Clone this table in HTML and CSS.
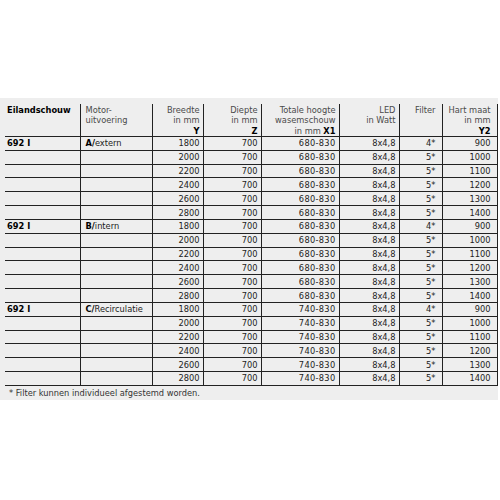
FILE: index.html
```html
<!DOCTYPE html>
<html>
<head>
<meta name="viewport" content="width=device-width, initial-scale=1">
<link rel="stylesheet" href="styles.css">
</head>
<body>

<div class="sheet">
    <table class="specs">
        <colgroup>
            <col class="c-name">
            <col class="c-motor">
            <col class="c-y">
            <col class="c-z">
            <col class="c-x1">
            <col class="c-led">
            <col class="c-filter">
            <col class="c-y2">
        </colgroup>
        <thead>
            <tr>
                <th class="name"><b>Eilandschouw</b></th>
                <th class="motor">Motor-<br>uitvoering</th>
                <th>Breedte<br>in mm<br><b>Y</b></th>
                <th>Diepte<br>in mm<br><b>Z</b></th>
                <th>Totale hoogte<br>wasemschouw<br>in mm <b>X1</b></th>
                <th>LED<br>in Watt</th>
                <th class="wide">Filter</th>
                <th class="wide">Hart maat<br>in mm<br><b>Y2</b></th>
            </tr>
        </thead>
        <tbody id="rows"></tbody>
    </table>
    <p class="note">* Filter kunnen individueel afgestemd worden.</p>
</div>

<script>
    var groups = [
        { code: "A", motor: "extern", height: "680-830" },
        { code: "B", motor: "intern", height: "680-830" },
        { code: "C", motor: "Recirculatie", height: "740-830" }
    ];
    var widths = [1800, 2000, 2200, 2400, 2600, 2800];
    var tbody = document.getElementById("rows");
    var html = "";

    // one block of six widths per motor variant
    groups.forEach(function(g) {
        widths.forEach(function(w, i) {
            html += "<tr>";
            html += i == 0 ? '<td class="name"><b>692 I</b></td>' : '<td class="name"></td>';
            html += i == 0 ? '<td class="motor"><b>' + g.code + '/</b>' + g.motor + '</td>' : '<td class="motor"></td>';
            html += "<td>" + w + "</td>";
            html += "<td>700</td>";
            html += '<td class="range">' + g.height + "</td>";
            html += "<td>8x4,8</td>";
            html += '<td class="wide">' + (i == 0 ? "4*" : "5*") + "</td>";
            html += '<td class="wide">' + (900 + i * 100) + "</td>";
            html += "</tr>";
        });
    });
    tbody.innerHTML = html;
</script>

</body>
</html>
```

FILE: styles.css
```css
body {
  margin: 0;
  background: #fff;
  font-family: "DejaVu Sans Condensed", "DejaVu Sans", sans-serif;
  font-stretch: condensed;
  color: #222;
}

/* Grey panel behind the table */
.sheet {
  margin-top: 98px;
  width: 498px;
  height: 302px;
  box-sizing: border-box;
  background: #eeeeee;
  padding: 6px 0 0 5px;
}

.specs {
  border-collapse: collapse;
  table-layout: fixed;
  width: 492px;
  font-size: 9.2px;
}

.c-name { width: 75px; }
.c-motor { width: 72px; }
.c-y { width: 51px; }
.c-z { width: 58px; }
.c-x1 { width: 78px; }
.c-led { width: 60px; }
.c-filter { width: 43px; }
.c-y2 { width: 55px; }

.specs th,
.specs td {
  border-right: 1px solid #222;
  border-bottom: 1px solid #222;
  text-align: right;
  padding: 0 3px 0 0;
  white-space: nowrap;
  overflow: hidden;
}

.specs th {
  font-weight: normal;
  color: #4a4a4a;
  vertical-align: top;
  line-height: 10.3px;
  height: 31px;
  padding-top: 1px;
}

.specs th b {
  color: #000;
}

.specs td {
  height: 12.83px;
  line-height: 12px;
  vertical-align: middle;
}

.specs td b {
  color: #000;
}

.specs .name {
  text-align: left;
  padding-left: 2px;
}

.specs .motor {
  text-align: left;
  padding-left: 5px;
}

.specs .wide {
  padding-right: 6px;
}

.specs .range {
  letter-spacing: 0.3px;
}

.note {
  margin: 1px 0 0 4px;
  font-size: 9.2px;
  color: #333;
}
```
